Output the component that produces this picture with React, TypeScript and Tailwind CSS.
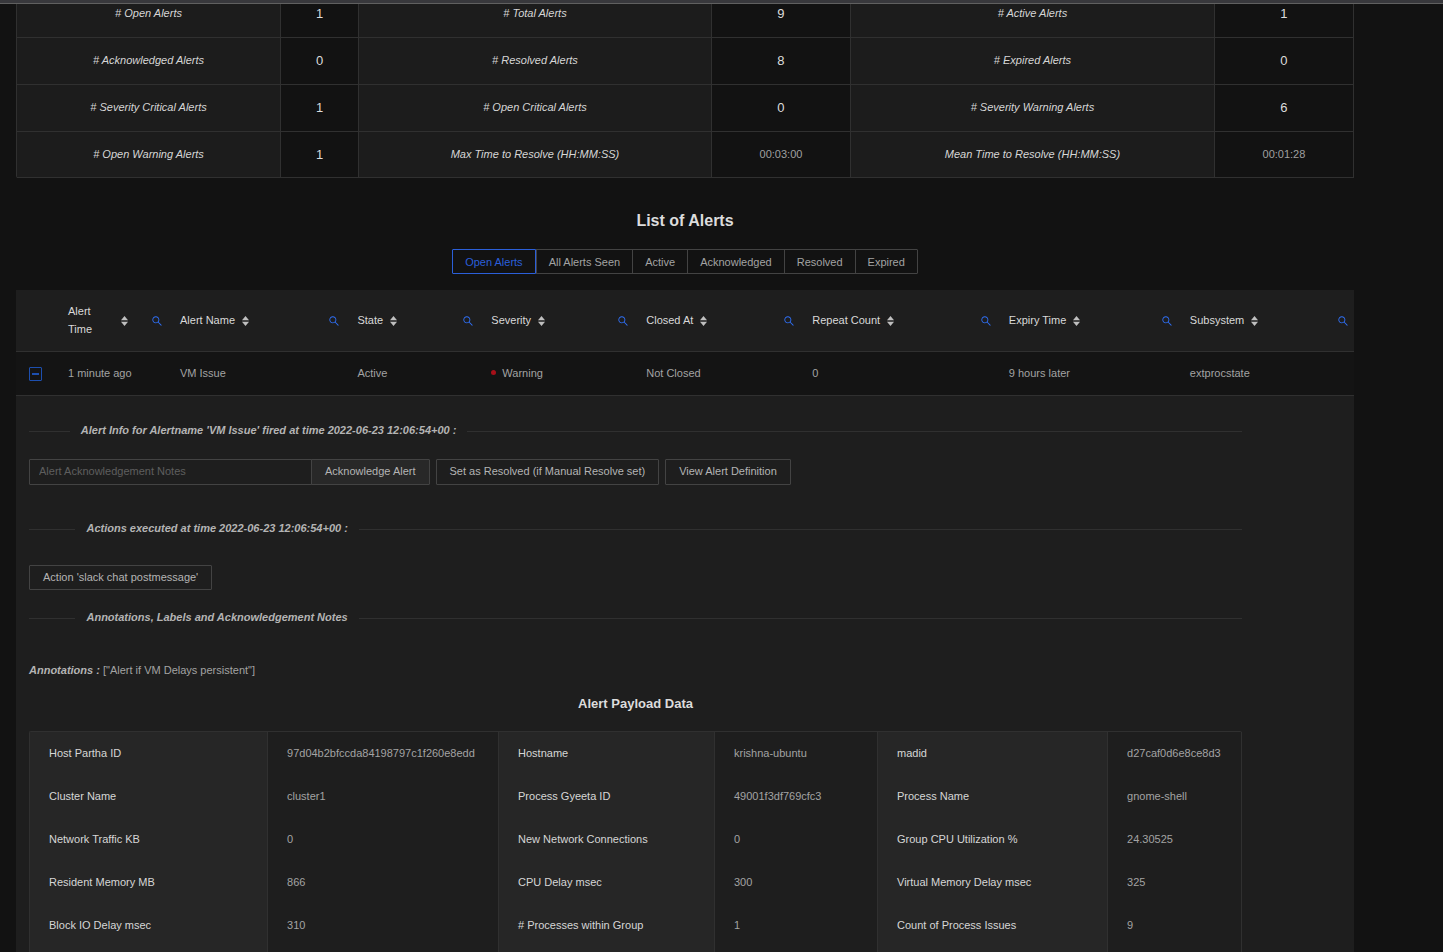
import React from 'react'
import clsx from 'clsx'
import { AiOutlineSearch } from 'react-icons/ai'

const summary = [
  ['# Open Alerts', '1', '# Total Alerts', '9', '# Active Alerts', '1'],
  ['# Acknowledged Alerts', '0', '# Resolved Alerts', '8', '# Expired Alerts', '0'],
  ['# Severity Critical Alerts', '1', '# Open Critical Alerts', '0', '# Severity Warning Alerts', '6'],
  ['# Open Warning Alerts', '1', 'Max Time to Resolve (HH:MM:SS)', '00:03:00', 'Mean Time to Resolve (HH:MM:SS)', '00:01:28'],
]

const tabs = ['Open Alerts', 'All Alerts Seen', 'Active', 'Acknowledged', 'Resolved', 'Expired']

const columns = [
  { title: 'Alert Time', width: 'w-[8.37%]' },
  { title: 'Alert Name', width: 'w-[13.26%]' },
  { title: 'State', width: 'w-[10.01%]' },
  { title: 'Severity', width: 'w-[11.58%]' },
  { title: 'Closed At', width: 'w-[12.41%]' },
  { title: 'Repeat Count', width: 'w-[14.69%]' },
  { title: 'Expiry Time', width: 'w-[13.53%]' },
  { title: 'Subsystem', width: 'w-[13.16%]' },
]

const payload = [
  ['Host Partha ID', '97d04b2bfccda84198797c1f260e8edd', 'Hostname', 'krishna-ubuntu', 'madid', 'd27caf0d6e8ce8d3'],
  ['Cluster Name', 'cluster1', 'Process Gyeeta ID', '49001f3df769cfc3', 'Process Name', 'gnome-shell'],
  ['Network Traffic KB', '0', 'New Network Connections', '0', 'Group CPU Utilization %', '24.30525'],
  ['Resident Memory MB', '866', 'CPU Delay msec', '300', 'Virtual Memory Delay msec', '325'],
  ['Block IO Delay msec', '310', '# Processes within Group', '1', 'Count of Process Issues', '9'],
  ['', '', '', '', '', ''],
]

const SortIcon = () => (
  <svg width="7" height="10" viewBox="0 0 7 10" fill="#bfbfbf" className="shrink-0" aria-hidden="true">
    <path d="M3.5 0 L7 4.3 H0 Z" />
    <path d="M3.5 10 L7 5.7 H0 Z" />
  </svg>
)

const SectionDivider = ({ children, className }: { children: React.ReactNode; className?: string }) => (
  <div className={clsx('flex items-center', className)}>
    <span className="mt-0.5 w-[5%] border-t border-[#303030]" />
    <h3 className="shrink-0 px-[11px] font-bold italic whitespace-nowrap text-[#b4b4b4]">{children}</h3>
    <span className="mt-0.5 w-[95%] border-t border-[#303030]" />
  </div>
)

const OutlineButton = ({ children, className }: { children: React.ReactNode; className?: string }) => (
  <button className={clsx('rounded-[1px] border border-[#434343] px-[13px] pb-0.5 whitespace-nowrap text-[#b4b4b4]', className)}>
    {children}
  </button>
)

const SummaryTable = () => (
  <div className="overflow-hidden">
    <table className="-mt-[13px] w-full table-fixed border-separate border-spacing-0 rounded-[2px] border-l border-[#303030] text-center">
      <colgroup>
        <col className="w-[19.75%]" />
        <col className="w-[5.83%]" />
        <col className="w-[26.4%]" />
        <col className="w-[10.4%]" />
        <col className="w-[27.22%]" />
        <col className="w-[10.4%]" />
      </colgroup>
      <tbody>
        {summary.map((row) => (
          <tr key={row[0]} className="h-[47px] last:h-[46px]">
            {row.map((cell, i) =>
              i % 2 === 0 ? (
                <th key={i} scope="row" className="border-r border-b border-[#303030] bg-[#1c1c1c] pb-0.5 font-normal italic text-[#d6d6d6]">
                  {cell}
                </th>
              ) : (
                <td
                  key={i}
                  className={clsx(
                    'border-r border-b border-[#303030]',
                    cell.includes(':') ? 'pb-0.5 text-[#a0a0a0]' : 'text-[13px] text-[#dcdcdc]'
                  )}
                >
                  {cell}
                </td>
              )
            )}
          </tr>
        ))}
      </tbody>
    </table>
  </div>
)

const PayloadTable = () => (
  <table className="mt-[18px] w-full table-fixed border-separate border-spacing-0 rounded-[2px] border-t border-l border-[#303030] text-left">
    <colgroup>
      <col className="w-[19.64%]" />
      <col className="w-[19.06%]" />
      <col className="w-[17.82%]" />
      <col className="w-[13.45%]" />
      <col className="w-[18.98%]" />
      <col className="w-[11.05%]" />
    </colgroup>
    <tbody>
      {payload.map((row, r) => (
        <tr key={r} className="h-[43px]">
          {row.map((cell, i) =>
            i % 2 === 0 ? (
              <th key={i} scope="row" className="border-r border-[#303030] bg-[#262626] pb-0.5 pl-[19px] font-normal text-[#d6d6d6]">
                {cell}
              </th>
            ) : (
              <td key={i} className="border-r border-[#303030] pb-0.5 pl-[19px] whitespace-nowrap text-[#a3a3a3]">
                {cell}
              </td>
            )
          )}
        </tr>
      ))}
    </tbody>
  </table>
)

const AlertDetails = () => (
  <div className="pt-[25px] pr-28 pl-[13px]">
    <SectionDivider>Alert Info for Alertname 'VM Issue' fired at time 2022-06-23 12:06:54+00 :</SectionDivider>

    <div className="mt-5 flex h-[26px] gap-1.5">
      <form className="flex" onSubmit={(e) => e.preventDefault()}>
        <input
          type="text"
          aria-label="Alert Acknowledgement Notes"
          placeholder="Alert Acknowledgement Notes"
          className="w-[283px] rounded-l-[1px] border border-[#434343] px-[9px] pb-0.5 text-[#d6d6d6] outline-none placeholder:text-[#5e5e5e]"
        />
        <OutlineButton className="-ml-px rounded-l-none bg-[#282828]">Acknowledge Alert</OutlineButton>
      </form>
      <OutlineButton>Set as Resolved (if Manual Resolve set)</OutlineButton>
      <OutlineButton>View Alert Definition</OutlineButton>
    </div>

    <SectionDivider className="mt-[34px]">Actions executed at time 2022-06-23 12:06:54+00 :</SectionDivider>
    <OutlineButton className="mt-7 block h-[25px]">Action 'slack chat postmessage'</OutlineButton>

    <SectionDivider className="mt-[18px]">Annotations, Labels and Acknowledgement Notes</SectionDivider>
    <p className="mt-[35px] text-[#a3a3a3]">
      <strong className="italic text-[#b4b4b4]">Annotations :</strong> ["Alert if VM Delays persistent"]
    </p>

    <h3 className="mt-4 text-center text-[13px] leading-[18px] font-bold text-[#dcdcdc]">Alert Payload Data</h3>
    <PayloadTable />
  </div>
)

const AlertsTable = () => (
  <table className="mt-4 w-full table-fixed border-separate border-spacing-0 text-left">
    <thead>
      <tr className="h-[62px] bg-[#1e1e1e]">
        <th className="w-[2.99%] border-b border-[#303030]" aria-label="Expand" />
        {columns.map((col) => (
          <th key={col.title} className={clsx('border-b border-[#303030] pr-[5px] pl-3 font-normal text-[#d9d9d9]', col.width)}>
            <div className="flex items-center justify-between">
              <button className="flex items-center gap-[7px] text-left">
                <span className={clsx('pb-0.5', col.title === 'Alert Time' ? 'w-[46px]' : 'whitespace-nowrap')}>{col.title}</span>
                <SortIcon />
              </button>
              <button aria-label={`Search ${col.title}`} className="text-[#2f6ff5]">
                <AiOutlineSearch size={12} />
              </button>
            </div>
          </th>
        ))}
      </tr>
    </thead>
    <tbody>
      <tr className="h-11 bg-[#141414] text-[#a3a3a3] [&>td]:border-b [&>td]:border-[#303030] [&>td]:pl-3 [&>td+td]:pb-0.5">
        <td>
          <button
            aria-label="Collapse row"
            className="ml-px flex h-[14px] w-[13px] items-center justify-center rounded-[1px] border border-[#1d4fae]"
          >
            <span className="h-[2px] w-[7px] bg-[#1d4fae]" />
          </button>
        </td>
        <td>1 minute ago</td>
        <td>VM Issue</td>
        <td>Active</td>
        <td>
          <span className="flex items-center gap-[6px]">
            <span className="size-[5px] rounded-full bg-[#a61019]" />
            Warning
          </span>
        </td>
        <td>Not Closed</td>
        <td>0</td>
        <td>9 hours later</td>
        <td>extprocstate</td>
      </tr>
      <tr className="bg-[#1e1e1e]">
        <td colSpan={9}>
          <AlertDetails />
        </td>
      </tr>
    </tbody>
  </table>
)

const App = () => {
  return (
    <div className="h-screen overflow-hidden bg-[#121212] font-['Liberation_Sans',Arial,sans-serif] text-[11px] leading-[18px]">
      <div className="h-1 border-b border-[#606060] bg-[#38383c]" />
      <main className="pr-[89px] pl-4">
        <SummaryTable />

        <h2 className="mt-[31px] text-center text-base font-bold text-[#dcdcdc]">List of Alerts</h2>

        <div className="mt-4 flex justify-center">
          {tabs.map((tab, i) => (
            <button
              key={tab}
              className={clsx(
                'h-[25px] border px-3 whitespace-nowrap first:rounded-l-[1px] last:rounded-r-[1px]',
                i === 0 ? 'border-[#2b5fd9] text-[#2b5fd9]' : 'border-[#434343] text-[#a3a3a3]',
                i > 1 && '-ml-px'
              )}
            >
              {tab}
            </button>
          ))}
        </div>

        <AlertsTable />
      </main>
    </div>
  )
}

export default App
